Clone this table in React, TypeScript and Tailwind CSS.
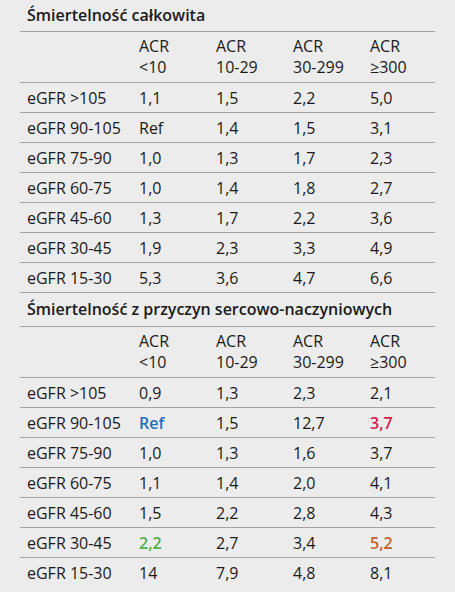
const cols = ['<10', '10-29', '30-299', '≥300'];

type Cell = { v: string; c?: string };

const total: [string, Cell[]][] = [
  ['eGFR >105', [{ v: '1,1' }, { v: '1,5' }, { v: '2,2' }, { v: '5,0' }]],
  ['eGFR 90-105', [{ v: 'Ref' }, { v: '1,4' }, { v: '1,5' }, { v: '3,1' }]],
  ['eGFR 75-90', [{ v: '1,0' }, { v: '1,3' }, { v: '1,7' }, { v: '2,3' }]],
  ['eGFR 60-75', [{ v: '1,0' }, { v: '1,4' }, { v: '1,8' }, { v: '2,7' }]],
  ['eGFR 45-60', [{ v: '1,3' }, { v: '1,7' }, { v: '2,2' }, { v: '3,6' }]],
  ['eGFR 30-45', [{ v: '1,9' }, { v: '2,3' }, { v: '3,3' }, { v: '4,9' }]],
  ['eGFR 15-30', [{ v: '5,3' }, { v: '3,6' }, { v: '4,7' }, { v: '6,6' }]],
];

const cardio: [string, Cell[]][] = [
  ['eGFR >105', [{ v: '0,9' }, { v: '1,3' }, { v: '2,3' }, { v: '2,1' }]],
  ['eGFR 90-105', [{ v: 'Ref', c: 'font-semibold text-[#1d6fb8]' }, { v: '1,5' }, { v: '12,7' }, { v: '3,7', c: 'font-semibold text-[#cf1d4c]' }]],
  ['eGFR 75-90', [{ v: '1,0' }, { v: '1,3' }, { v: '1,6' }, { v: '3,7' }]],
  ['eGFR 60-75', [{ v: '1,1' }, { v: '1,4' }, { v: '2,0' }, { v: '4,1' }]],
  ['eGFR 45-60', [{ v: '1,5' }, { v: '2,2' }, { v: '2,8' }, { v: '4,3' }]],
  ['eGFR 30-45', [{ v: '2,2', c: 'font-semibold text-[#4eb148]' }, { v: '2,7' }, { v: '3,4' }, { v: '5,2', c: 'font-semibold text-[#c0622b]' }]],
  ['eGFR 15-30', [{ v: '14' }, { v: '7,9' }, { v: '4,8' }, { v: '8,1' }]],
];

const grid = 'grid grid-cols-[112px_77px_77px_77px_77px]';

function Section({ title, rows, first }: { title: string; rows: [string, Cell[]][]; first?: boolean }) {
  return (
    <div>
      <div className={`${first ? 'h-[32px] pt-[3px]' : 'h-[34px] pt-[4px]'} px-[7px] font-semibold leading-[24px] border-b border-[#a3a3a3]`}>
        {title}
      </div>
      <div className={`${grid} h-[51px] pt-[4px] leading-[21px] border-b border-[#a3a3a3]`}>
        <div />
        {cols.map((c) => (
          <div key={c} className="px-[7px]">
            <div>ACR</div>
            <div>{c}</div>
          </div>
        ))}
      </div>
      {rows.map(([label, cells], i) => (
        <div
          key={label}
          className={`${grid} h-[30px] items-center ${i < rows.length - 1 || first ? 'border-b border-[#a3a3a3]' : ''}`}
        >
          <div className="px-[7px]">{label}</div>
          {cells.map((cell, j) => (
            <div key={j} className={`px-[7px] ${cell.c ?? ''}`}>
              {cell.v}
            </div>
          ))}
        </div>
      ))}
    </div>
  );
}

export default function App() {
  return (
    <div className="w-[455px] h-[600px] bg-white">
      <div
        className="h-[592px] bg-[#ececec] px-[20px] text-[16px] leading-[22px] text-[#1a1a1a]"
        style={{ fontFamily: '"Open Sans", "Noto Sans", sans-serif' }}
      >
        <Section title="Śmiertelność całkowita" rows={total} first />
        <Section title="Śmiertelność z przyczyn sercowo-naczyniowych" rows={cardio} />
      </div>
    </div>
  );
}
